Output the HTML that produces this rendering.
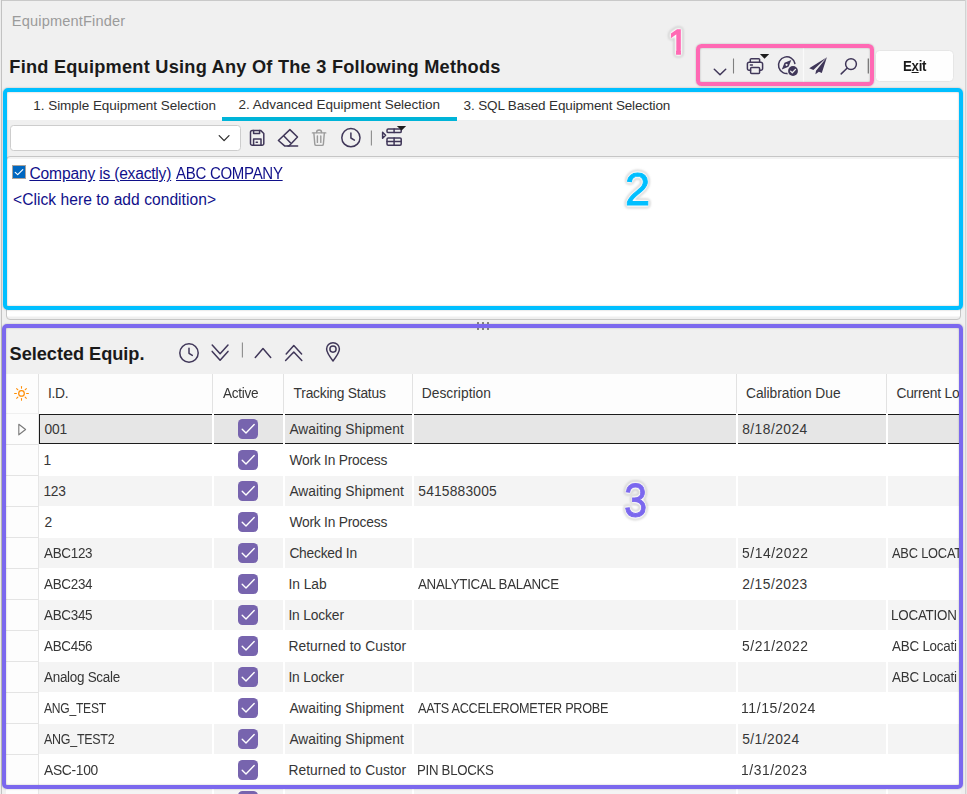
<!DOCTYPE html>
<html lang="en"><head><meta charset="utf-8"><title>EquipmentFinder</title>
<style>
html,body{margin:0;padding:0}
body{width:967px;height:794px;overflow:hidden;position:relative;background:#f0f0f0;font-family:"Liberation Sans",sans-serif}
.b{position:absolute}
.t{position:absolute;white-space:pre;line-height:20px;height:20px;transform-origin:0 50%}
.clip{max-width:60px}
.ann{position:absolute;box-sizing:border-box;border-style:solid;border-width:4px;box-shadow:0 0 2px rgba(0,0,0,.28), inset 0 0 2px rgba(0,0,0,.28)}
.num{position:absolute;font-weight:normal;line-height:1;white-space:pre;transform-origin:0 50%;-webkit-text-stroke:0.9px currentColor;filter:drop-shadow(0 0 0.6px #fff) drop-shadow(0 0 0.8px #fff) drop-shadow(0 0 1px #fff) drop-shadow(0 0 1px #fff) drop-shadow(0 0.5px 1.3px rgba(0,0,0,.4))}
#page{position:absolute;left:0;top:0;width:967px;height:794px;overflow:hidden}
</style></head><body><div id="page">
<!-- window chrome -->
<div class="b" style="left:0;top:0;width:967px;height:1px;background:#c9c9c9"></div>
<div class="b" style="left:0;top:0;width:1px;height:794px;background:#ededed"></div>
<div class="b" style="left:1px;top:0;width:1px;height:794px;background:#c2c2c2"></div>
<div class="b" style="left:965px;top:0;width:1px;height:794px;background:#d3d3d3"></div>
<div class="b" style="left:966px;top:0;width:1px;height:794px;background:#e6e6e6"></div>
<!-- exit button -->
<div class="b" style="left:874.8px;top:50.4px;width:79.6px;height:31.2px;box-sizing:border-box;background:#fefefe;border:1px solid #e6e6e6;border-radius:4.5px"></div>
<!-- condition panel -->
<div class="b" style="left:7px;top:92px;width:953px;height:28px;background:#fff"></div>
<div class="b" style="left:222px;top:117px;width:235px;height:4px;background:#00b4d8"></div>
<div class="b" style="left:6px;top:156px;width:955px;height:164px;box-sizing:border-box;background:linear-gradient(#f3f3f3,#f3f3f3 2px,#fff 2px,#fff 159px,#efefef 160px);border:1px solid #c6c6c6;border-radius:4px"></div>
<div class="b" style="left:10px;top:125px;width:231px;height:26px;box-sizing:border-box;background:#fff;border:1px solid #cdcdcd;border-radius:3.5px"></div>
<!-- grid -->
<div class="b" style="left:6px;top:374px;width:955px;height:39px;background:#fdfdfd"></div>
<div class="b" style="left:38px;top:374px;width:1px;height:39px;background:#e2e2e2"></div>
<div class="b" style="left:212px;top:374px;width:1px;height:39px;background:#e2e2e2"></div>
<div class="b" style="left:283px;top:374px;width:1px;height:39px;background:#e2e2e2"></div>
<div class="b" style="left:412px;top:374px;width:1px;height:39px;background:#e2e2e2"></div>
<div class="b" style="left:736px;top:374px;width:1px;height:39px;background:#e2e2e2"></div>
<div class="b" style="left:886px;top:374px;width:1px;height:39px;background:#e2e2e2"></div>
<div class="b" style="left:39px;top:413px;width:922px;height:381px;background:#fff"></div>
<div class="b" style="left:39px;top:414px;width:922px;height:30px;background:#e6e6e6"></div>
<div class="b" style="left:6px;top:414px;width:32px;height:31px;background:#fdfdfd;border-bottom:1px solid #e4e4e4;box-sizing:border-box"></div>
<div class="b" style="left:39px;top:445px;width:922px;height:30px;background:#ffffff"></div>
<div class="b" style="left:6px;top:445px;width:32px;height:31px;background:#fdfdfd;border-bottom:1px solid #e4e4e4;box-sizing:border-box"></div>
<div class="b" style="left:39px;top:476px;width:922px;height:30px;background:#f4f4f4"></div>
<div class="b" style="left:6px;top:476px;width:32px;height:31px;background:#fdfdfd;border-bottom:1px solid #e4e4e4;box-sizing:border-box"></div>
<div class="b" style="left:39px;top:507px;width:922px;height:30px;background:#ffffff"></div>
<div class="b" style="left:6px;top:507px;width:32px;height:31px;background:#fdfdfd;border-bottom:1px solid #e4e4e4;box-sizing:border-box"></div>
<div class="b" style="left:39px;top:538px;width:922px;height:30px;background:#f4f4f4"></div>
<div class="b" style="left:6px;top:538px;width:32px;height:31px;background:#fdfdfd;border-bottom:1px solid #e4e4e4;box-sizing:border-box"></div>
<div class="b" style="left:39px;top:569px;width:922px;height:30px;background:#ffffff"></div>
<div class="b" style="left:6px;top:569px;width:32px;height:31px;background:#fdfdfd;border-bottom:1px solid #e4e4e4;box-sizing:border-box"></div>
<div class="b" style="left:39px;top:600px;width:922px;height:30px;background:#f4f4f4"></div>
<div class="b" style="left:6px;top:600px;width:32px;height:31px;background:#fdfdfd;border-bottom:1px solid #e4e4e4;box-sizing:border-box"></div>
<div class="b" style="left:39px;top:631px;width:922px;height:30px;background:#ffffff"></div>
<div class="b" style="left:6px;top:631px;width:32px;height:31px;background:#fdfdfd;border-bottom:1px solid #e4e4e4;box-sizing:border-box"></div>
<div class="b" style="left:39px;top:662px;width:922px;height:30px;background:#f4f4f4"></div>
<div class="b" style="left:6px;top:662px;width:32px;height:31px;background:#fdfdfd;border-bottom:1px solid #e4e4e4;box-sizing:border-box"></div>
<div class="b" style="left:39px;top:693px;width:922px;height:30px;background:#ffffff"></div>
<div class="b" style="left:6px;top:693px;width:32px;height:31px;background:#fdfdfd;border-bottom:1px solid #e4e4e4;box-sizing:border-box"></div>
<div class="b" style="left:39px;top:724px;width:922px;height:30px;background:#f4f4f4"></div>
<div class="b" style="left:6px;top:724px;width:32px;height:31px;background:#fdfdfd;border-bottom:1px solid #e4e4e4;box-sizing:border-box"></div>
<div class="b" style="left:39px;top:755px;width:922px;height:30px;background:#ffffff"></div>
<div class="b" style="left:6px;top:755px;width:32px;height:31px;background:#fdfdfd;border-bottom:1px solid #e4e4e4;box-sizing:border-box"></div>
<div class="b" style="left:39px;top:786px;width:922px;height:30px;background:#f4f4f4"></div>
<div class="b" style="left:6px;top:786px;width:32px;height:31px;background:#fdfdfd;border-bottom:1px solid #e4e4e4;box-sizing:border-box"></div>
<div class="b" style="left:38px;top:413px;width:1px;height:381px;background:#e6e6e6"></div>
<div class="b" style="left:212px;top:413px;width:1.5px;height:381px;background:#fff"></div>
<div class="b" style="left:283px;top:413px;width:1.5px;height:381px;background:#fff"></div>
<div class="b" style="left:412px;top:413px;width:1.5px;height:381px;background:#fff"></div>
<div class="b" style="left:736px;top:413px;width:1.5px;height:381px;background:#fff"></div>
<div class="b" style="left:886px;top:413px;width:1.5px;height:381px;background:#fff"></div>
<div class="b" style="left:39px;top:414px;width:922px;height:1px;background:#1c1c1c"></div>
<div class="b" style="left:39px;top:443px;width:922px;height:1px;background:#1c1c1c"></div>
<div class="b" style="left:39px;top:414px;width:1px;height:30px;background:#1c1c1c"></div>
<div class="b" style="left:212px;top:413px;width:1.5px;height:32px;background:#fff"></div>
<div class="b" style="left:283px;top:413px;width:1.5px;height:32px;background:#fff"></div>
<div class="b" style="left:412px;top:413px;width:1.5px;height:32px;background:#fff"></div>
<div class="b" style="left:736px;top:413px;width:1.5px;height:32px;background:#fff"></div>
<div class="b" style="left:886px;top:413px;width:1.5px;height:32px;background:#fff"></div>
<div class="b" style="left:238px;top:419px;width:20px;height:20px;background:#7764ae;border-radius:4.5px"></div>
<div class="b" style="left:238px;top:450px;width:20px;height:20px;background:#7764ae;border-radius:4.5px"></div>
<div class="b" style="left:238px;top:481px;width:20px;height:20px;background:#7764ae;border-radius:4.5px"></div>
<div class="b" style="left:238px;top:512px;width:20px;height:20px;background:#7764ae;border-radius:4.5px"></div>
<div class="b" style="left:238px;top:543px;width:20px;height:20px;background:#7764ae;border-radius:4.5px"></div>
<div class="b" style="left:238px;top:574px;width:20px;height:20px;background:#7764ae;border-radius:4.5px"></div>
<div class="b" style="left:238px;top:605px;width:20px;height:20px;background:#7764ae;border-radius:4.5px"></div>
<div class="b" style="left:238px;top:636px;width:20px;height:20px;background:#7764ae;border-radius:4.5px"></div>
<div class="b" style="left:238px;top:667px;width:20px;height:20px;background:#7764ae;border-radius:4.5px"></div>
<div class="b" style="left:238px;top:698px;width:20px;height:20px;background:#7764ae;border-radius:4.5px"></div>
<div class="b" style="left:238px;top:729px;width:20px;height:20px;background:#7764ae;border-radius:4.5px"></div>
<div class="b" style="left:238px;top:760px;width:20px;height:20px;background:#7764ae;border-radius:4.5px"></div>
<div class="b" style="left:238px;top:791px;width:20px;height:20px;background:#7764ae;border-radius:4.5px"></div>
<svg class="b" style="left:0;top:0" width="967" height="794" viewBox="0 0 967 794">
<path d="M242.2,429.3 L246,433 L254.2,424.6" fill="none" stroke="#fff" stroke-width="1.4" stroke-linecap="round" stroke-linejoin="round"/>
<path d="M242.2,460.3 L246,464 L254.2,455.6" fill="none" stroke="#fff" stroke-width="1.4" stroke-linecap="round" stroke-linejoin="round"/>
<path d="M242.2,491.3 L246,495 L254.2,486.6" fill="none" stroke="#fff" stroke-width="1.4" stroke-linecap="round" stroke-linejoin="round"/>
<path d="M242.2,522.3 L246,526 L254.2,517.6" fill="none" stroke="#fff" stroke-width="1.4" stroke-linecap="round" stroke-linejoin="round"/>
<path d="M242.2,553.3 L246,557 L254.2,548.6" fill="none" stroke="#fff" stroke-width="1.4" stroke-linecap="round" stroke-linejoin="round"/>
<path d="M242.2,584.3 L246,588 L254.2,579.6" fill="none" stroke="#fff" stroke-width="1.4" stroke-linecap="round" stroke-linejoin="round"/>
<path d="M242.2,615.3 L246,619 L254.2,610.6" fill="none" stroke="#fff" stroke-width="1.4" stroke-linecap="round" stroke-linejoin="round"/>
<path d="M242.2,646.3 L246,650 L254.2,641.6" fill="none" stroke="#fff" stroke-width="1.4" stroke-linecap="round" stroke-linejoin="round"/>
<path d="M242.2,677.3 L246,681 L254.2,672.6" fill="none" stroke="#fff" stroke-width="1.4" stroke-linecap="round" stroke-linejoin="round"/>
<path d="M242.2,708.3 L246,712 L254.2,703.6" fill="none" stroke="#fff" stroke-width="1.4" stroke-linecap="round" stroke-linejoin="round"/>
<path d="M242.2,739.3 L246,743 L254.2,734.6" fill="none" stroke="#fff" stroke-width="1.4" stroke-linecap="round" stroke-linejoin="round"/>
<path d="M242.2,770.3 L246,774 L254.2,765.6" fill="none" stroke="#fff" stroke-width="1.4" stroke-linecap="round" stroke-linejoin="round"/>
<path d="M242.2,801.3 L246,805 L254.2,796.6" fill="none" stroke="#fff" stroke-width="1.4" stroke-linecap="round" stroke-linejoin="round"/>
<path d="M18.8,424.2 L25.6,429.5 L18.8,434.8 Z" fill="none" stroke="#7a7a7a" stroke-width="1.1" stroke-linejoin="round"/>
<circle cx="21.5" cy="393.4" r="2.8" fill="none" stroke="#ff8c00" stroke-width="1.2"/>
<line x1="26.60" y1="393.40" x2="28.40" y2="393.40" stroke="#ff8c00" stroke-width="1.05" stroke-linecap="round"/>
<line x1="25.11" y1="397.01" x2="26.38" y2="398.28" stroke="#ff8c00" stroke-width="1.05" stroke-linecap="round"/>
<line x1="21.50" y1="398.50" x2="21.50" y2="400.30" stroke="#ff8c00" stroke-width="1.05" stroke-linecap="round"/>
<line x1="17.89" y1="397.01" x2="16.62" y2="398.28" stroke="#ff8c00" stroke-width="1.05" stroke-linecap="round"/>
<line x1="16.40" y1="393.40" x2="14.60" y2="393.40" stroke="#ff8c00" stroke-width="1.05" stroke-linecap="round"/>
<line x1="17.89" y1="389.79" x2="16.62" y2="388.52" stroke="#ff8c00" stroke-width="1.05" stroke-linecap="round"/>
<line x1="21.50" y1="388.30" x2="21.50" y2="386.50" stroke="#ff8c00" stroke-width="1.05" stroke-linecap="round"/>
<line x1="25.11" y1="389.79" x2="26.38" y2="388.52" stroke="#ff8c00" stroke-width="1.05" stroke-linecap="round"/>
<path d="M714.3,69.2 L720,74.8 L725.7,69.2" fill="none" stroke="#403759" stroke-width="1.5" stroke-linecap="round" stroke-linejoin="round" stroke-width="1.6"/>
<line x1="733.5" y1="58.5" x2="733.5" y2="73.5" stroke="#808080" stroke-width="1.1"/>
<path d="M750.3,62.2 V59.6 a0.9,0.9 0 0 1 0.9,-0.9 H758.7 a0.9,0.9 0 0 1 0.9,0.9 V62.2" fill="none" stroke="#403759" stroke-width="1.5" stroke-linecap="round" stroke-linejoin="round"/>
<path d="M750.5,70.2 H749 a1.6,1.6 0 0 1 -1.6,-1.6 V64 a1.8,1.8 0 0 1 1.8,-1.8 H760.8 a1.8,1.8 0 0 1 1.8,1.8 V68.6 a1.6,1.6 0 0 1 -1.6,1.6 H759.6" fill="none" stroke="#403759" stroke-width="1.5" stroke-linecap="round" stroke-linejoin="round"/>
<rect x="750.6" y="67.6" width="9" height="5.9" rx="1" fill="none" stroke="#403759" stroke-width="1.5" stroke-linecap="round" stroke-linejoin="round"/>
<line x1="750.4" y1="64.9" x2="752.4" y2="64.9" fill="none" stroke="#403759" stroke-width="1.5" stroke-linecap="round" stroke-linejoin="round" stroke-width="1.2"/>
<path d="M759.9,54 H769.2 L764.55,58.8 Z" fill="#1e1e1e"/>
<path d="M789.5,73 A8.3,8.3 0 1 1 794.9,63.5" fill="none" stroke="#403759" stroke-width="1.5" stroke-linecap="round" stroke-linejoin="round" stroke-width="1.3"/>
<path d="M791.3,60 L788.6,66.8 L781.8,69.6 L784.5,62.8 Z M786.55,63.7 a1.1,1.1 0 1 0 0.01,0 Z" fill="#403759" fill-rule="evenodd"/>
<circle cx="793" cy="71" r="6.1" fill="#f0f0f0"/>
<circle cx="793" cy="71" r="4.9" fill="#403759"/>
<path d="M790.6,71.1 L792.3,72.8 L795.5,69.4" fill="none" stroke="#f0f0f0" stroke-width="1.3" stroke-linecap="round" stroke-linejoin="round"/>
<line x1="803.5" y1="48" x2="803.5" y2="82" stroke="#fafafa" stroke-width="1.2"/>
<path d="M826.9,57.2 L809.2,68.3 L813.4,69.9 Z" fill="#403759"/>
<path d="M826.9,57.2 L816,70.7 L815.4,74.2 L818.9,71.8 L821.8,73.1 Z" fill="#403759"/>
<circle cx="851" cy="64.1" r="5.4" fill="none" stroke="#403759" stroke-width="1.5" stroke-linecap="round" stroke-linejoin="round"/>
<line x1="847" y1="68.2" x2="841.2" y2="73.9" fill="none" stroke="#403759" stroke-width="1.5" stroke-linecap="round" stroke-linejoin="round" stroke-width="1.6"/>
<line x1="868.3" y1="58.5" x2="868.3" y2="73.5" stroke="#707070" stroke-width="1.2"/>
<path d="M219.2,135.6 L224.1,140.6 L229,135.6" fill="none" stroke="#2e2e2e" stroke-width="1.3" stroke-linecap="round" stroke-linejoin="round"/>
<path d="M252.3,130.4 H260.6 L263.8,133.5 V143.4 a1.8,1.8 0 0 1 -1.8,1.8 H252.3 a1.8,1.8 0 0 1 -1.8,-1.8 V132.2 a1.8,1.8 0 0 1 1.8,-1.8 Z" fill="none" stroke="#403759" stroke-width="1.5" stroke-linecap="round" stroke-linejoin="round"/>
<path d="M253.6,130.6 V133.6 H259.6 V130.6" fill="none" stroke="#403759" stroke-width="1.5" stroke-linecap="round" stroke-linejoin="round"/>
<path d="M253.6,145 V139 H261 V145" fill="none" stroke="#403759" stroke-width="1.5" stroke-linecap="round" stroke-linejoin="round"/>
<line x1="256.2" y1="142.2" x2="257.4" y2="142.2" fill="none" stroke="#403759" stroke-width="1.5" stroke-linecap="round" stroke-linejoin="round" stroke-width="1.3"/>
<path d="M289.9,129.6 L297.5,137 L289,145.9 H284.6 L278.4,140.5 Z" fill="none" stroke="#403759" stroke-width="1.5" stroke-linecap="round" stroke-linejoin="round"/>
<line x1="283.9" y1="136" x2="290.4" y2="142.8" fill="none" stroke="#403759" stroke-width="1.5" stroke-linecap="round" stroke-linejoin="round"/>
<line x1="288" y1="145.9" x2="297.6" y2="145.9" fill="none" stroke="#403759" stroke-width="1.5" stroke-linecap="round" stroke-linejoin="round"/>
<line x1="312.4" y1="132.9" x2="325.8" y2="132.9" fill="none" stroke="#9b9b9b" stroke-width="1.4" stroke-linecap="round" stroke-linejoin="round"/>
<path d="M316.6,132.6 a2.5,2.6 0 0 1 5,0" fill="none" stroke="#9b9b9b" stroke-width="1.4" stroke-linecap="round" stroke-linejoin="round"/>
<path d="M313.9,133.2 L314.8,144.1 a1.4,1.4 0 0 0 1.4,1.3 H322 a1.4,1.4 0 0 0 1.4,-1.3 L324.3,133.2" fill="none" stroke="#9b9b9b" stroke-width="1.4" stroke-linecap="round" stroke-linejoin="round"/>
<line x1="317.4" y1="136" x2="317.4" y2="142.4" fill="none" stroke="#9b9b9b" stroke-width="1.4" stroke-linecap="round" stroke-linejoin="round"/>
<line x1="320.8" y1="136" x2="320.8" y2="142.4" fill="none" stroke="#9b9b9b" stroke-width="1.4" stroke-linecap="round" stroke-linejoin="round"/>
<circle cx="350.9" cy="137.7" r="9.1" fill="none" stroke="#403759" stroke-width="1.5" stroke-linecap="round" stroke-linejoin="round" stroke-width="1.4"/>
<path d="M350.9,132.9 V138 L354.4,140.1" fill="none" stroke="#403759" stroke-width="1.5" stroke-linecap="round" stroke-linejoin="round" stroke-width="1.4"/>
<line x1="371.4" y1="130.4" x2="371.4" y2="145.6" stroke="#8c8c8c" stroke-width="1.1"/>
<rect x="387" y="129" width="14.2" height="3.6" rx="1.2" fill="none" stroke="#403759" stroke-width="1.5" stroke-linecap="round" stroke-linejoin="round" stroke-width="1.3"/>
<line x1="394.1" y1="129" x2="394.1" y2="132.6" fill="none" stroke="#403759" stroke-width="1.5" stroke-linecap="round" stroke-linejoin="round" stroke-width="1.2"/>
<rect x="387" y="137.9" width="14.2" height="7.4" rx="1.2" fill="none" stroke="#403759" stroke-width="1.5" stroke-linecap="round" stroke-linejoin="round" stroke-width="1.3"/>
<line x1="394.1" y1="137.9" x2="394.1" y2="145.3" fill="none" stroke="#403759" stroke-width="1.5" stroke-linecap="round" stroke-linejoin="round" stroke-width="1.2"/>
<line x1="387" y1="141.6" x2="401.2" y2="141.6" fill="none" stroke="#403759" stroke-width="1.5" stroke-linecap="round" stroke-linejoin="round" stroke-width="1.2"/>
<path d="M382.6,132.2 L385.6,135.2 L382.6,138.2 Z" fill="none" stroke="#403759" stroke-width="1.5" stroke-linecap="round" stroke-linejoin="round" stroke-width="1"/>
<path d="M396.8,126 H406.1 L401.6,130.4 Z" fill="#1e1e1e"/>
<rect x="12.5" y="165.5" width="13" height="13" fill="#0067c0" stroke="#aaa39c" stroke-width="1"/>
<path d="M15.2,172.3 L17.7,174.6 L22.8,169.6" fill="none" stroke="#fff" stroke-width="1.15" stroke-linecap="round" stroke-linejoin="round"/>
<circle cx="189" cy="353" r="9.2" fill="none" stroke="#403759" stroke-width="1.5" stroke-linecap="round" stroke-linejoin="round" stroke-width="1.4"/>
<path d="M189,348.3 V353.3 L192.3,355.4" fill="none" stroke="#403759" stroke-width="1.5" stroke-linecap="round" stroke-linejoin="round" stroke-width="1.4"/>
<path d="M212.2,345 L220.1,353.8 L228,345 M212.2,351.4 L220.1,360.3 L228,351.4" fill="none" stroke="#403759" stroke-width="1.5" stroke-linecap="round" stroke-linejoin="round" stroke-width="1.4"/>
<line x1="242.4" y1="342.6" x2="242.4" y2="357.6" stroke="#8c8c8c" stroke-width="1.1"/>
<path d="M255.3,357.4 L263,348.5 L270.7,357.4" fill="none" stroke="#403759" stroke-width="1.5" stroke-linecap="round" stroke-linejoin="round" stroke-width="1.5"/>
<path d="M286.2,354 L293.8,345.6 L301.6,354 M285.6,360.5 L293.8,352 L301.8,360.5" fill="none" stroke="#403759" stroke-width="1.5" stroke-linecap="round" stroke-linejoin="round" stroke-width="1.5"/>
<path d="M333,361 C329.5,356.5 326.6,352.6 326.6,349.1 a6.4,6.4 0 0 1 12.8,0 C339.4,352.6 336.5,356.5 333,361 Z" fill="none" stroke="#403759" stroke-width="1.5" stroke-linecap="round" stroke-linejoin="round" stroke-width="1.1"/>
<circle cx="333" cy="349.1" r="3.1" fill="none" stroke="#403759" stroke-width="1.5" stroke-linecap="round" stroke-linejoin="round" stroke-width="1.1"/>
<rect x="477" y="322" width="2" height="2" fill="#858585"/>
<rect x="477" y="328" width="2" height="2" fill="#858585"/>
<rect x="482" y="322" width="2" height="2" fill="#858585"/>
<rect x="482" y="328" width="2" height="2" fill="#858585"/>
<rect x="487" y="322" width="2" height="2" fill="#858585"/>
<rect x="487" y="328" width="2" height="2" fill="#858585"/>
</svg>
<span class="t" style="left:11.80px;top:10.94px;font-size:14.6px;font-weight:normal;color:#9b9b9b;letter-spacing:0.159px;">EquipmentFinder</span>
<span class="t" style="left:9.30px;top:57.19px;font-size:18.2px;font-weight:bold;color:#1a1a1a;letter-spacing:0.236px;">Find Equipment Using Any Of The 3 Following Methods</span>
<span class="t" style="left:902.70px;top:56.35px;font-size:14.3px;font-weight:bold;color:#1a1a1a;letter-spacing:-0.300px;transform:scaleX(0.9273);">E<u>x</u>it</span>
<span class="t" style="left:33.30px;top:96.32px;font-size:13.5px;font-weight:normal;color:#303030;letter-spacing:-0.044px;">1. Simple Equipment Selection</span>
<span class="t" style="left:238.60px;top:95.32px;font-size:13.5px;font-weight:normal;color:#303030;letter-spacing:-0.014px;">2. Advanced Equipment Selection</span>
<span class="t" style="left:463.60px;top:96.32px;font-size:13.5px;font-weight:normal;color:#303030;letter-spacing:-0.143px;">3. SQL Based Equipment Selection</span>
<span class="t" style="left:29.40px;top:164.29px;font-size:15.6px;font-weight:normal;color:#10108a;letter-spacing:-0.140px;text-decoration:underline;">Company</span>
<span class="t" style="left:99.20px;top:164.29px;font-size:15.6px;font-weight:normal;color:#10108a;letter-spacing:-0.211px;text-decoration:underline;">is (exactly)</span>
<span class="t" style="left:176.40px;top:164.29px;font-size:15.6px;font-weight:normal;color:#10108a;letter-spacing:-0.300px;transform:scaleX(0.9626);text-decoration:underline;">ABC COMPANY</span>
<span class="t" style="left:13.00px;top:190.19px;font-size:15.6px;font-weight:normal;color:#10108a;letter-spacing:0.037px;">&lt;Click here to add condition&gt;</span>
<span class="t" style="left:9.60px;top:343.59px;font-size:18.2px;font-weight:bold;color:#1a1a1a;letter-spacing:-0.041px;">Selected Equip.</span>
<span class="t" style="left:47.90px;top:384.22px;font-size:13.8px;font-weight:normal;color:#363636;letter-spacing:-0.277px;">I.D.</span>
<span class="t" style="left:222.70px;top:384.22px;font-size:13.8px;font-weight:normal;color:#363636;letter-spacing:-0.300px;transform:scaleX(0.9863);">Active</span>
<span class="t" style="left:293.60px;top:384.22px;font-size:13.8px;font-weight:normal;color:#363636;letter-spacing:-0.224px;">Tracking Status</span>
<span class="t" style="left:421.70px;top:384.22px;font-size:13.8px;font-weight:normal;color:#363636;letter-spacing:0.026px;">Description</span>
<span class="t" style="left:746.00px;top:384.22px;font-size:13.8px;font-weight:normal;color:#363636;letter-spacing:-0.037px;">Calibration Due</span>
<span class="t" style="left:44.40px;top:419.92px;font-size:13.8px;font-weight:normal;color:#363636;letter-spacing:-0.123px;">001</span>
<span class="t" style="left:289.40px;top:419.92px;font-size:13.8px;font-weight:normal;color:#363636;letter-spacing:0.026px;">Awaiting Shipment</span>
<span class="t" style="left:742.20px;top:419.92px;font-size:13.8px;font-weight:normal;color:#363636;letter-spacing:0.462px;">8/18/2024</span>
<span class="t" style="left:43.40px;top:450.92px;font-size:13.8px;font-weight:normal;color:#363636;letter-spacing:-0.220px;">1</span>
<span class="t" style="left:289.40px;top:450.92px;font-size:13.8px;font-weight:normal;color:#363636;letter-spacing:-0.218px;">Work In Process</span>
<span class="t" style="left:43.40px;top:481.92px;font-size:13.8px;font-weight:normal;color:#363636;letter-spacing:-0.220px;">123</span>
<span class="t" style="left:289.40px;top:481.92px;font-size:13.8px;font-weight:normal;color:#363636;letter-spacing:0.026px;">Awaiting Shipment</span>
<span class="t" style="left:418.30px;top:481.92px;font-size:13.8px;font-weight:normal;color:#363636;letter-spacing:0.182px;">5415883005</span>
<span class="t" style="left:44.40px;top:512.92px;font-size:13.8px;font-weight:normal;color:#363636;letter-spacing:-0.220px;">2</span>
<span class="t" style="left:289.40px;top:512.92px;font-size:13.8px;font-weight:normal;color:#363636;letter-spacing:-0.218px;">Work In Process</span>
<span class="t" style="left:44.40px;top:543.92px;font-size:13.8px;font-weight:normal;color:#363636;letter-spacing:-0.300px;transform:scaleX(0.9738);">ABC123</span>
<span class="t" style="left:289.40px;top:543.92px;font-size:13.8px;font-weight:normal;color:#363636;letter-spacing:-0.236px;">Checked In</span>
<span class="t" style="left:742.20px;top:543.92px;font-size:13.8px;font-weight:normal;color:#363636;letter-spacing:0.550px;transform:scaleX(1.0045);">5/14/2022</span>
<span class="t" style="left:892.30px;top:543.92px;font-size:13.8px;font-weight:normal;color:#363636;letter-spacing:-0.220px;transform:scaleX(0.9300);overflow:hidden;width:71.7px;">ABC LOCAT</span>
<span class="t" style="left:44.40px;top:574.92px;font-size:13.8px;font-weight:normal;color:#363636;letter-spacing:-0.300px;transform:scaleX(0.9738);">ABC234</span>
<span class="t" style="left:288.40px;top:574.92px;font-size:13.8px;font-weight:normal;color:#363636;letter-spacing:-0.017px;">In Lab</span>
<span class="t" style="left:418.30px;top:574.92px;font-size:13.8px;font-weight:normal;color:#363636;letter-spacing:-0.300px;transform:scaleX(0.9668);">ANALYTICAL BALANCE</span>
<span class="t" style="left:742.20px;top:574.92px;font-size:13.8px;font-weight:normal;color:#363636;letter-spacing:0.462px;">2/15/2023</span>
<span class="t" style="left:44.40px;top:605.92px;font-size:13.8px;font-weight:normal;color:#363636;letter-spacing:-0.300px;transform:scaleX(0.9738);">ABC345</span>
<span class="t" style="left:288.40px;top:605.92px;font-size:13.8px;font-weight:normal;color:#363636;letter-spacing:-0.145px;">In Locker</span>
<span class="t" style="left:891.33px;top:605.92px;font-size:13.8px;font-weight:normal;color:#363636;letter-spacing:-0.220px;transform:scaleX(0.9700);overflow:hidden;width:69.8px;">LOCATION</span>
<span class="t" style="left:44.40px;top:636.92px;font-size:13.8px;font-weight:normal;color:#363636;letter-spacing:-0.300px;transform:scaleX(0.9738);">ABC456</span>
<span class="t" style="left:288.40px;top:636.92px;font-size:13.8px;font-weight:normal;color:#363636;letter-spacing:0.072px;">Returned to Custor</span>
<span class="t" style="left:742.20px;top:636.92px;font-size:13.8px;font-weight:normal;color:#363636;letter-spacing:0.550px;transform:scaleX(1.0045);">5/21/2022</span>
<span class="t" style="left:892.30px;top:636.92px;font-size:13.8px;font-weight:normal;color:#363636;letter-spacing:-0.220px;transform:scaleX(0.9700);overflow:hidden;width:68.8px;">ABC Locati</span>
<span class="t" style="left:44.40px;top:667.92px;font-size:13.8px;font-weight:normal;color:#363636;letter-spacing:-0.300px;transform:scaleX(0.9766);">Analog Scale</span>
<span class="t" style="left:288.40px;top:667.92px;font-size:13.8px;font-weight:normal;color:#363636;letter-spacing:-0.145px;">In Locker</span>
<span class="t" style="left:892.30px;top:667.92px;font-size:13.8px;font-weight:normal;color:#363636;letter-spacing:-0.220px;transform:scaleX(0.9700);overflow:hidden;width:68.8px;">ABC Locati</span>
<span class="t" style="left:44.40px;top:698.92px;font-size:13.8px;font-weight:normal;color:#363636;letter-spacing:-0.300px;transform:scaleX(0.8779);">ANG_TEST</span>
<span class="t" style="left:289.40px;top:698.92px;font-size:13.8px;font-weight:normal;color:#363636;letter-spacing:0.026px;">Awaiting Shipment</span>
<span class="t" style="left:418.30px;top:698.92px;font-size:13.8px;font-weight:normal;color:#363636;letter-spacing:-0.300px;transform:scaleX(0.9175);">AATS ACCELEROMETER PROBE</span>
<span class="t" style="left:741.18px;top:698.92px;font-size:13.8px;font-weight:normal;color:#363636;letter-spacing:0.550px;transform:scaleX(1.0193);">11/15/2024</span>
<span class="t" style="left:44.40px;top:729.92px;font-size:13.8px;font-weight:normal;color:#363636;letter-spacing:-0.300px;transform:scaleX(0.9040);">ANG_TEST2</span>
<span class="t" style="left:289.40px;top:729.92px;font-size:13.8px;font-weight:normal;color:#363636;letter-spacing:0.026px;">Awaiting Shipment</span>
<span class="t" style="left:742.20px;top:729.92px;font-size:13.8px;font-weight:normal;color:#363636;letter-spacing:0.453px;">5/1/2024</span>
<span class="t" style="left:44.40px;top:760.92px;font-size:13.8px;font-weight:normal;color:#363636;letter-spacing:-0.300px;transform:scaleX(0.9998);">ASC-100</span>
<span class="t" style="left:288.40px;top:760.92px;font-size:13.8px;font-weight:normal;color:#363636;letter-spacing:0.072px;">Returned to Custor</span>
<span class="t" style="left:417.34px;top:760.92px;font-size:13.8px;font-weight:normal;color:#363636;letter-spacing:-0.300px;transform:scaleX(0.9594);">PIN BLOCKS</span>
<span class="t" style="left:741.20px;top:760.92px;font-size:13.8px;font-weight:normal;color:#363636;letter-spacing:0.550px;transform:scaleX(1.0045);">1/31/2023</span>
<span class="t" style="left:896.40px;top:384.22px;font-size:13.8px;font-weight:normal;color:#363636;letter-spacing:-0.220px;overflow:hidden;width:62.6px;">Current Lo</span>
<!-- annotations -->
<div class="ann" style="left:696px;top:44px;width:178px;height:42px;border-color:#ff69b4;border-radius:5.5px"></div>
<div class="ann" style="left:3px;top:88px;width:960px;height:222px;border-color:#00bfff;border-radius:5px"></div>
<div class="ann" style="left:2px;top:324px;width:961px;height:465px;border-color:#7b68ee;border-radius:5px"></div>
<span class="num" style="left:668.2px;top:24.7px;font-size:34.9px;color:#ff69b4;-webkit-text-stroke-width:1.4px"><span style="display:inline-block;clip-path:polygon(-0.3em -0.2em,1.3em -0.2em,1.3em 0.70em,0.365em 0.70em,0.365em 1.2em,0.225em 1.2em,0.225em 0.70em,-0.3em 0.70em)">1</span></span>
<span class="num" style="left:625.4px;top:166px;font-size:46.6px;color:#00bfff;transform:scaleX(0.97)">2</span>
<span class="num" style="left:623.9px;top:477.4px;font-size:47.8px;color:#7b68ee;transform:scaleX(0.87)">3</span>
</div></body></html>
